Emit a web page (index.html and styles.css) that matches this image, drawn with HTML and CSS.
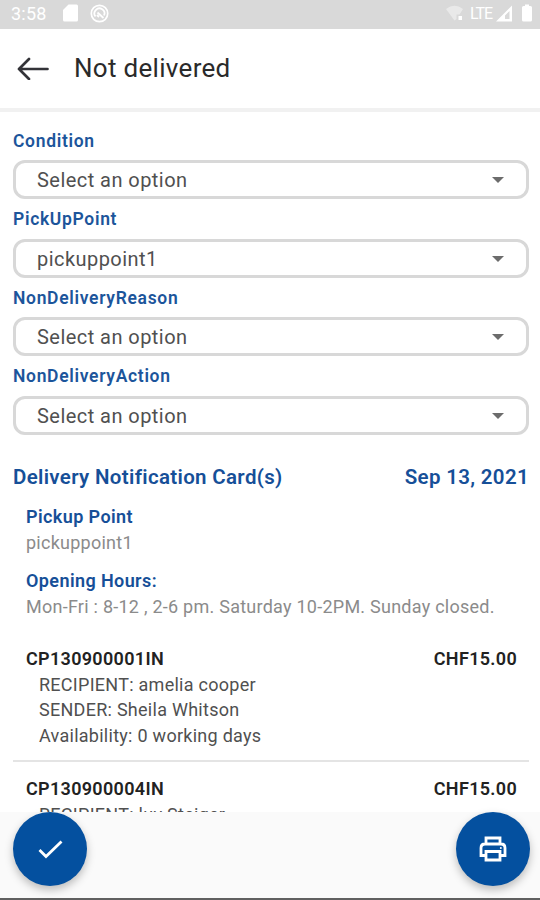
FILE: index.html
```
<!DOCTYPE html>
<html lang="en">
<head>
<meta charset="utf-8">
<title>Not delivered</title>
<link rel="stylesheet" href="styles.css">
</head>
<body>
<div class="screen">
  <div class="status">
    <span class="clock">3:58</span>
    <svg class="sd" width="15" height="18" viewBox="0 0 15 18"><path d="M5.500 0.500H13.500Q15 0.500 15 2V16Q15 17.500 13.500 17.500H1.500Q0 17.500 0 16V6Z" fill="#fff"/></svg>
    <svg class="sync" width="19" height="19" viewBox="0 0 19 19" fill="none" stroke="#fff"><circle cx="9.500" cy="9.500" r="8.200" stroke-width="1.700"/><path d="M5.500 12.500A5 5 0 1 1 14 11.500M7.500 8.500L13.500 14M7 11L9 13" stroke-width="1.800"/></svg>
    <span class="grow"></span>
    <svg class="wifi" width="18" height="17" viewBox="0 0 18 17"><path d="M0 4Q8.500-2.500 17 4L13.500 9.500H10.500V14L8.500 15.500Z" fill="#e9e9e9"/><rect x="12.500" y="11" width="3.500" height="4" fill="#fff"/></svg>
    <span class="lte">LTE</span>
    <svg class="signal" width="17" height="17" viewBox="0 0 17 17"><path d="M0 16.500L16 0.500V16.500ZM9 14H13.500V6L9 10.500Z" fill="#fff" fill-rule="evenodd"/></svg>
    <svg class="battery" width="10" height="18" viewBox="0 0 10 18"><path d="M3 0.500H7V2H8.500Q10 2 10 3.500V16Q10 17.500 8.500 17.500H1.500Q0 17.500 0 16V3.500Q0 2 1.500 2H3Z" fill="#fff"/></svg>
  </div>
  <header class="bar">
    <svg class="back" width="32" height="24" viewBox="0 0 32 24" fill="none" stroke="#333338" stroke-width="2.700" stroke-linecap="round" stroke-linejoin="round"><path d="M30.500 13H2M12 3L2 13L12 23"/></svg>
    <h1>Not delivered</h1>
  </header>
  <main class="content">
    <div class="field"><label>Condition</label><div class="select"><span>Select an option</span><i class="caret"></i></div></div>
    <div class="field"><label>PickUpPoint</label><div class="select"><span>pickuppoint1</span><i class="caret"></i></div></div>
    <div class="field"><label>NonDeliveryReason</label><div class="select"><span>Select an option</span><i class="caret"></i></div></div>
    <div class="field"><label>NonDeliveryAction</label><div class="select"><span>Select an option</span><i class="caret"></i></div></div>
    <div class="heading"><span>Delivery Notification Card(s)</span><span>Sep 13, 2021</span></div>
    <section class="info">
      <h3>Pickup Point</h3>
      <p>pickuppoint1</p>
      <h3 class="hours">Opening Hours:</h3>
      <p class="times">Mon-Fri : 8-12 , 2-6 pm. Saturday 10-2PM. Sunday closed.</p>
    </section>
    <article class="parcel">
      <div class="code"><span>CP130900001IN</span><span>CHF15.00</span></div>
      <p>RECIPIENT: amelia cooper</p>
      <p>SENDER: Sheila Whitson</p>
      <p>Availability: 0 working days</p>
    </article>
    <article class="parcel">
      <div class="code"><span>CP130900004IN</span><span>CHF15.00</span></div>
      <p>RECIPIENT: luv Steiger</p>
    </article>
  </main>
  <footer class="actions">
    <div class="fab"><svg width="74" height="74" viewBox="0 0 74 74" fill="none" stroke="#fff" stroke-width="2.800"><path d="M26.500 38L33 44.500L48.500 29.500"/></svg></div>
    <div class="fab"><svg width="74" height="74" viewBox="0 0 74 74" fill="none" stroke="#fff" stroke-width="2.800"><path d="M30 32V26H44V32M30 43.500H25V36Q25 32 29 32H45Q49 32 49 36V43.500H44M30 39.500H44V48H30Z"/><circle cx="44.800" cy="36" r="1" fill="#fff" stroke="none"/></svg></div>
  </footer>
</div>
</body>
</html>
```

FILE: styles.css
```
* { box-sizing: border-box; }
body { margin: 0; background: #fff; font-family: Roboto, "Liberation Sans", sans-serif; }
h1, h3, p { margin: 0; font-weight: 400; }
svg { display: block; flex: none; }
.screen { width: 540px; height: 900px; display: flex; flex-direction: column; overflow: hidden; }
.status { flex: none; height: 29px; background: #d9d9d9; display: flex; align-items: center; padding: 0 8px 3px 11px; color: #fff; }
.clock { width: 52px; font-size: 18px; letter-spacing: .2px; }
.sync { margin-left: 12px; }
.grow { flex: 1; }
.lte { width: 26px; margin-left: 6px; font-size: 16px; letter-spacing: -1px; }
.battery { margin-left: 9px; }
.bar { flex: none; height: 83px; border-bottom: 4px solid #f1f1f1; display: flex; align-items: center; padding: 0 0 1px 17px; }
.bar h1 { margin-left: 25px; font-size: 26px; line-height: 30px; color: #2a2a2a; letter-spacing: .3px; }
.content { flex: 1; min-height: 0; overflow: hidden; padding: 10px 11px 0 13px; }
.field { height: 78.4px; }
.field label { display: block; height: 38.4px; line-height: 39.6px; color: #1c559b; font-size: 17.500px; font-weight: 600; letter-spacing: .68px; }
.select { height: 39px; border: 3px solid #d8d8d8; border-radius: 12px; display: flex; align-items: center; justify-content: space-between; padding: 1px 22px 0 21px; font-size: 20px; color: #505050; letter-spacing: .45px; }
.caret { border: 6px solid transparent; border-top-color: #6c6c6c; border-bottom: 0; }
.heading { margin-top: 25.4px; height: 32px; line-height: 32px; display: flex; justify-content: space-between; color: #164f98; font-size: 20.500px; font-weight: 600; letter-spacing: .33px; }
.info { padding: 11px 0 0 13px; }
.info h3 { color: #164f98; font-size: 18px; line-height: 26px; font-weight: 600; letter-spacing: .4px; }
.info p { color: #8b8b8b; font-size: 18px; line-height: 26px; letter-spacing: .25px; white-space: nowrap; }
.info .hours { margin-top: 12px; }
.parcel { padding: 14px 12px 12px 13px; border-bottom: 2px solid #e4e4e4; }
.info + .parcel { padding-top: 26px; }
.code { display: flex; justify-content: space-between; font-size: 18px; line-height: 26px; font-weight: 600; color: #222; letter-spacing: .32px; }
.parcel p { padding-left: 13px; font-size: 18px; line-height: 25.500px; color: #505050; letter-spacing: .27px; }
.actions { flex: none; height: 88px; background: #fafafa; border-bottom: 2px solid #606060; display: flex; justify-content: space-between; padding: 0 10px 0 13px; }
.fab { width: 74px; height: 74px; border-radius: 50%; background: #04509f; box-shadow: 0 4px 8px rgba(0,0,0,.25); }
```
